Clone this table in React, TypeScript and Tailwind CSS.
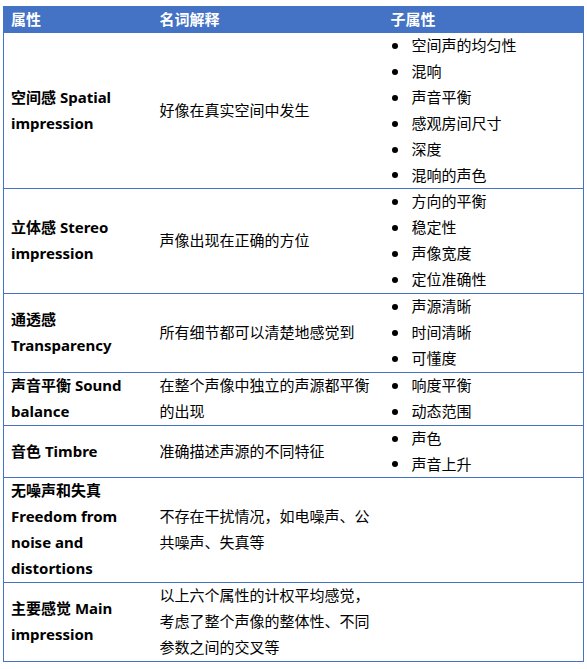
import React from "react";

type Row = { name: string[]; desc: string[]; subs: string[] };

const rows: Row[] = [
  {
    name: ["空间感 Spatial", "impression"],
    desc: ["好像在真实空间中发生"],
    subs: ["空间声的均匀性", "混响", "声音平衡", "感观房间尺寸", "深度", "混响的声色"],
  },
  {
    name: ["立体感 Stereo", "impression"],
    desc: ["声像出现在正确的方位"],
    subs: ["方向的平衡", "稳定性", "声像宽度", "定位准确性"],
  },
  {
    name: ["通透感", "Transparency"],
    desc: ["所有细节都可以清楚地感觉到"],
    subs: ["声源清晰", "时间清晰", "可懂度"],
  },
  {
    name: ["声音平衡 Sound", "balance"],
    desc: ["在整个声像中独立的声源都平衡", "的出现"],
    subs: ["响度平衡", "动态范围"],
  },
  {
    name: ["音色 Timbre"],
    desc: ["准确描述声源的不同特征"],
    subs: ["声色", "声音上升"],
  },
  {
    name: ["无噪声和失真", "Freedom from", "noise and", "distortions"],
    desc: ["不存在干扰情况，如电噪声、公", "共噪声、失真等"],
    subs: [],
  },
  {
    name: ["主要感觉 Main", "impression"],
    desc: ["以上六个属性的计权平均感觉，", "考虑了整个声像的整体性、不同", "参数之间的交叉等"],
    subs: [],
  },
];

export default function App() {
  return (
    <div
      className="min-h-screen bg-white pt-[6px] pl-[3px] text-[15px] leading-[25.9px] text-black"
      style={{ fontFamily: '"Noto Sans", "Noto Sans CJK SC", sans-serif' }}
    >
      <table className="w-[580px] table-fixed border-collapse border-x border-b border-[#4472C4]">
        <colgroup>
          <col className="w-[149px]" />
          <col className="w-[231px]" />
          <col className="w-[200px]" />
        </colgroup>
        <thead>
          <tr className="bg-[#4472C4] text-white font-bold">
            <th className="h-[27px] px-[7px] py-0 text-left align-middle leading-[27px]">属性</th>
            <th className="h-[27px] px-[7px] py-0 text-left align-middle leading-[27px]">名词解释</th>
            <th className="h-[27px] px-[7px] py-0 text-left align-middle leading-[27px]">子属性</th>
          </tr>
        </thead>
        <tbody>
          {rows.map((r, i) => (
            <tr key={i} className="border-b border-[#4472C4]">
              <td className="px-[7px] py-0 align-middle font-bold">
                {r.name.map((l, j) => (
                  <div key={j} className="whitespace-nowrap">{l}</div>
                ))}
              </td>
              <td className="px-[7px] py-0 align-middle">
                {r.desc.map((l, j) => (
                  <div key={j} className="whitespace-nowrap">{l}</div>
                ))}
              </td>
              <td className="p-0 align-middle">
                {r.subs.length > 0 && (
                  <ul>
                    {r.subs.map((s, j) => (
                      <li key={j} className="flex items-center whitespace-nowrap">
                        <span className="flex w-[28px] shrink-0 items-center">
                          <span className="ml-[8px] block h-[6px] w-[6px] rounded-full bg-black" />
                        </span>
                        <span>{s}</span>
                      </li>
                    ))}
                  </ul>
                )}
              </td>
            </tr>
          ))}
        </tbody>
      </table>
    </div>
  );
}
